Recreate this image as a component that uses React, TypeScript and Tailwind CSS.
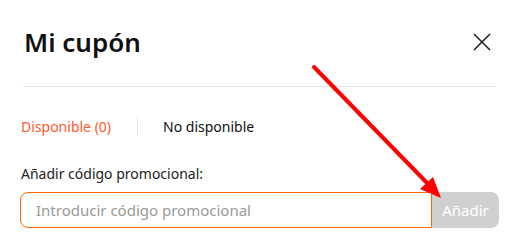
export default function App() {
  return (
    <div className="relative w-[522px] h-[250px] bg-white overflow-hidden font-['Noto_Sans','Open_Sans',sans-serif]">
      <div className="flex items-center justify-between pl-[24px] pr-[31px] pt-[24px] h-[60px]">
        <h1 className="text-[26px] leading-[36px] font-semibold text-[#111]">Mi cupón</h1>
        <button className="text-[#222]">
          <svg width="18" height="18" viewBox="0 0 18 18" fill="none" stroke="currentColor" strokeWidth="1.6">
            <path d="M1 1L17 17M17 1L1 17" />
          </svg>
        </button>
      </div>

      <div className="mx-[23px] mt-[26px] w-[473px] border-t border-[#e5e5e5]" />

      <div className="flex items-center pl-[21px] mt-[29px] h-[20px] text-[14px]">
        <span className="text-[#ff5a2c]">Disponible (0)</span>
        <span className="ml-[26px] mr-[25px] h-[18px] w-px bg-[#e5e5e5]" />
        <span className="text-[#111]">No disponible</span>
      </div>

      <p className="pl-[21px] mt-[28px] text-[14px] leading-[20px] text-[#222]">Añadir código promocional:</p>

      <div className="flex ml-[20px] mt-[8px] h-[36px] w-[479px]">
        <input
          placeholder="Introducir código promocional"
          className="flex-1 min-w-0 h-full border border-[#ff6a00] rounded-l-[8px] pl-[15px] text-[15px] placeholder:text-[#999] outline-none"
        />
        <button className="w-[67px] h-full bg-[#d0d0d0] text-white text-[15px] rounded-r-[8px]">Añadir</button>
      </div>

      <svg className="absolute left-0 top-0 pointer-events-none" width="522" height="250" viewBox="0 0 522 250">
        <line x1="314" y1="67" x2="430" y2="186" stroke="#ff0000" strokeWidth="4" strokeLinecap="round" />
        <polygon points="441,198 420,189 433,177" fill="#ff0000" />
      </svg>
    </div>
  )
}
